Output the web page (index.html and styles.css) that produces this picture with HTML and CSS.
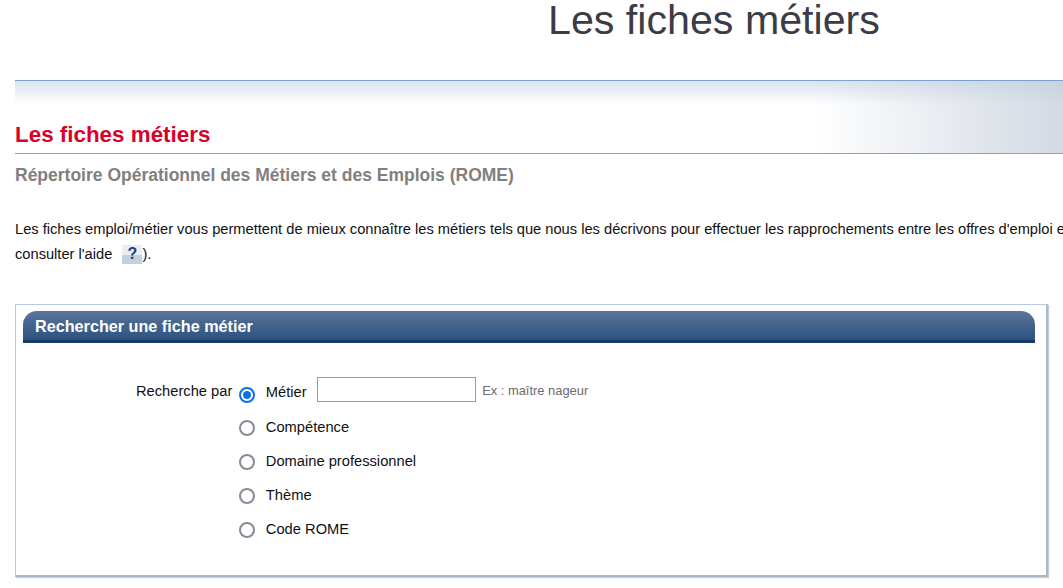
FILE: index.html
```html
<!DOCTYPE html>
<html lang="fr">
<head>
<meta charset="utf-8">
<title>Les fiches métiers</title>
<link rel="stylesheet" href="styles.css">
</head>
<body>
<div class="site-title">Les fiches métiers</div>
<main class="content">
  <header class="banner">
    <h1 class="banner-title">Les fiches métiers</h1>
  </header>
  <h2 class="subtitle">Répertoire Opérationnel des Métiers et des Emplois (ROME)</h2>
  <p class="intro">Les fiches emploi/métier vous permettent de mieux connaître les métiers tels que nous les décrivons pour effectuer les rapprochements entre les offres d'emploi et les<br>consulter l'aide <span class="help">?</span>).</p>
  <section class="panel">
    <h3 class="panel-head">Rechercher une fiche métier</h3>
    <form class="search">
      <span class="search-label">Recherche par</span>
      <div class="options">
        <div class="option first">
          <span class="radio checked"></span><span class="option-text">Métier</span>
          <input class="field" type="text" aria-label="Métier">
          <span class="hint">Ex : maître nageur</span>
        </div>
        <div class="option"><span class="radio"></span><span class="option-text">Compétence</span></div>
        <div class="option"><span class="radio"></span><span class="option-text">Domaine professionnel</span></div>
        <div class="option"><span class="radio"></span><span class="option-text">Thème</span></div>
        <div class="option"><span class="radio"></span><span class="option-text">Code ROME</span></div>
      </div>
    </form>
  </section>
</main>
</body>
</html>
```
FILE: styles.css
```css
html, body {
  margin: 0;
  padding: 0;
  height: 588px;
  overflow: hidden;
  background: #fff;
  font-family: "Liberation Sans", Arial, sans-serif;
}
.site-title {
  height: 80px;
  padding-left: 548px;
  box-sizing: border-box;
  font-size: 41.2px;
  line-height: 40px;
  color: #3c3c47;
  white-space: nowrap;
}
.content {
  padding-left: 15px;
}
.banner {
  height: 74px;
  box-sizing: border-box;
  border-top: 1px solid #7ea0cf;
  border-bottom: 1px solid #df7f92;
  background:
    linear-gradient(to bottom, rgba(190, 205, 225, 0.55), rgba(255, 255, 255, 0) 24px),
    linear-gradient(to right, #fff 0, #fff 800px, #d3dae3 100%);
}
.banner-title {
  margin: 0;
  padding-top: 41px;
  font-size: 22.4px;
  line-height: 26px;
  font-weight: bold;
  color: #d9002a;
}
.subtitle {
  margin: 11px 0 0;
  font-size: 17.5px;
  line-height: 20px;
  font-weight: bold;
  color: #808080;
}
.intro {
  margin: 32px 0 0;
  height: 51px;
  font-size: 14.66px;
  line-height: 25px;
  color: #111;
  white-space: nowrap;
}
.help {
  display: inline-block;
  width: 20px;
  height: 19px;
  margin: -6px 0 -6px 6px;
  vertical-align: 0;
  text-align: center;
  font-size: 16px;
  line-height: 18px;
  font-weight: bold;
  color: #1d3f85;
  background: linear-gradient(to bottom, #eaeef2 0, #eaeef2 10px, #c5d0df 10px, #c5d0df 100%);
}
.panel {
  width: 1033px;
  height: 273px;
  box-sizing: border-box;
  margin-top: 36px;
  padding: 6px 11px 0 7px;
  border: 1px solid #b5cae3;
  border-right: 2px solid #a3bcd9;
  border-bottom: 2px solid #a9b6c6;
  box-shadow: 1px 1px 1px #ccc;
}
.panel-head {
  margin: 0;
  height: 32px;
  box-sizing: border-box;
  padding-left: 12px;
  border-radius: 14px 14px 0 0;
  border-bottom: 3px solid #183a64;
  background: linear-gradient(to bottom, #5a7598, #2c5282);
  color: #fff;
  font-size: 16.2px;
  line-height: 30px;
  font-weight: bold;
}
.search {
  display: flex;
  padding: 34px 0 0 113px;
  font-size: 14.7px;
  color: #111;
}
.search-label {
  line-height: 29px;
  white-space: nowrap;
}
.options {
  display: flex;
  flex-direction: column;
  margin-left: 7px;
}
.option {
  display: flex;
  align-items: center;
  height: 34px;
}
.option.first {
  height: 25px;
  margin-bottom: 8px;
}
.radio {
  width: 12px;
  height: 12px;
  margin: 1px 10.5px 0 0;
  border: 2px solid #8a8a96;
  border-radius: 50%;
  flex: none;
  background: #fff;
}
.radio.checked {
  margin-top: 11px;
  border-color: #0a6fe8;
  background: radial-gradient(circle, #0a6fe8 0, #0a6fe8 3.5px, #fff 4.5px);
}
.option-text {
  white-space: nowrap;
}
.first .option-text {
  padding-top: 4px;
}
.field {
  width: 159px;
  height: 25px;
  box-sizing: border-box;
  margin: 0 6px 0 10.5px;
  padding: 0;
  border: 1px solid #8ba0b5;
  background: #fff;
}
.hint {
  padding-top: 2px;
  font-size: 12.9px;
  color: #6b6b6b;
  white-space: nowrap;
}
```
